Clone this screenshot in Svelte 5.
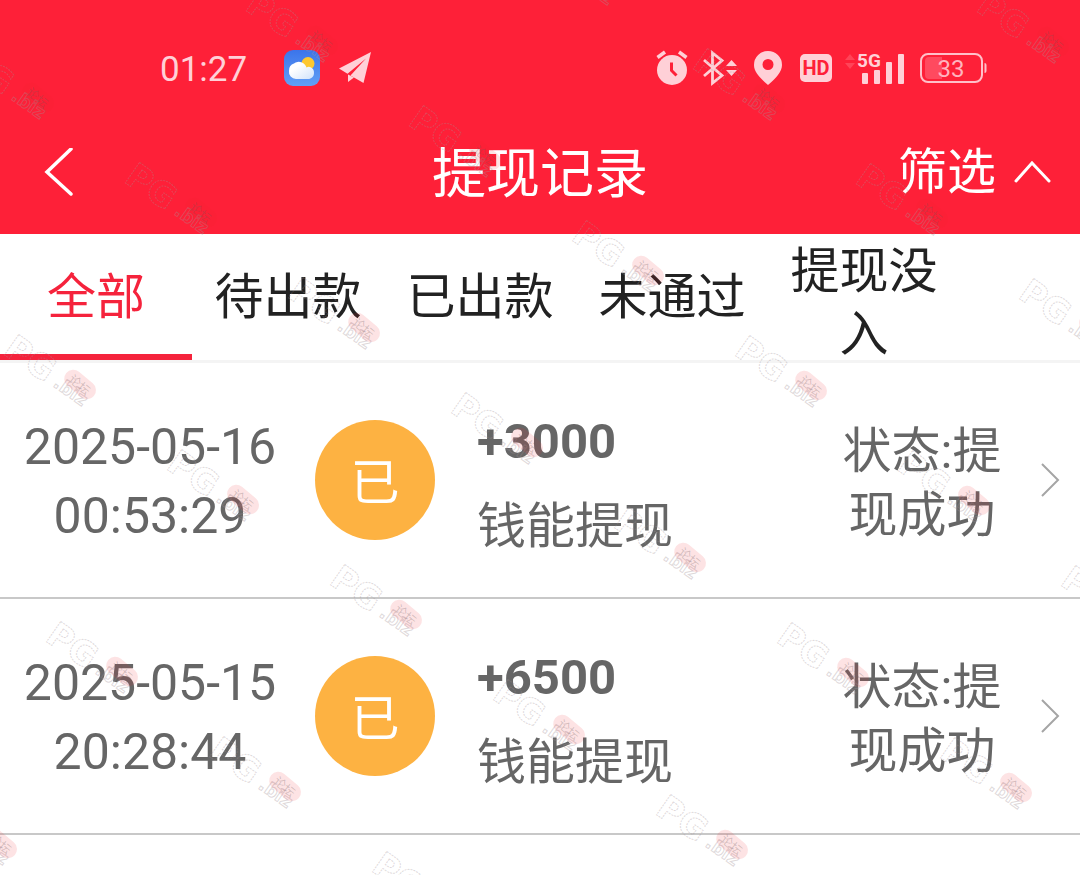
<script lang="ts">
  type Entry = { date: string; time: string; amount: string; name: string; status: string };

  const tabs = ["全部", "待出款", "已出款", "未通过", "提现没入"];
  let active = $state(0);
  let filterOpen = $state(true);

  const entries: Entry[] = [
    { date: "2025-05-16", time: "00:53:29", amount: "+3000", name: "钱能提现", status: "提现成功" },
    { date: "2025-05-15", time: "20:28:44", amount: "+6500", name: "钱能提现", status: "提现成功" },
  ];

  // slanted lattice of watermark stamps
  const stamps: { x: number; y: number }[] = [];
  for (let row = -2; row < 8; row++) {
    for (let col = -3; col < 8; col++) {
      const x = 976 - 121 * row - 284 * col;
      const y = -10 + 172 * row + 57 * col;
      if (x > -90 && x < 1075 && y > -75 && y < 870) stamps.push({ x, y });
    }
  }
</script>

<div class="page">
  <header>
    <div class="status-bar">
      <div class="group">
        <span class="clock">01:27</span>
        <svg class="weather" width="36" height="36" viewBox="0 0 36 36" aria-hidden="true">
          <defs>
            <linearGradient id="sky" x1="0" y1="0" x2="0" y2="1">
              <stop offset="0" stop-color="#3b74ea" />
              <stop offset="1" stop-color="#62a0f6" />
            </linearGradient>
            <linearGradient id="cloud" x1="0" y1="0" x2="1" y2="1">
              <stop offset="0.3" stop-color="#fff" />
              <stop offset="1" stop-color="#cfe2fb" />
            </linearGradient>
          </defs>
          <rect width="36" height="36" rx="9" fill="url(#sky)" />
          <circle cx="24" cy="13.500" r="6.500" fill="#fdc830" />
          <path d="M12 29a7 7 0 0 1-7-8 7 7 0 0 1 5-7.500 8 8 0 0 1 12.500 4 4.500 4.500 0 0 1 3.500-.5 6 6 0 0 1 4 6c0 3.500-2.500 6-6 6z" fill="url(#cloud)" />
        </svg>
        <svg width="34" height="32" viewBox="0 0 34 32" fill="#ffd0d7" aria-hidden="true">
          <path d="M33 0 1 16.500l8.500 5.200L28 6.500 12.500 23.500 25.500 31z" />
          <path d="M10 22.500v7.500l6-4.500z" />
        </svg>
      </div>
      <div class="group">
        <svg width="32" height="36" viewBox="0 0 32 36" aria-hidden="true">
          <circle cx="16" cy="20" r="15" fill="#ffd0d7" />
          <path d="M1.500 7.500 9 2M30.500 7.500 23 2" stroke="#ffd0d7" stroke-width="3.500" fill="none" />
          <path d="M15.500 12.500v8l5 5" stroke="#fe2038" stroke-width="3" fill="none" />
        </svg>
        <svg class="bluetooth" width="34" height="36" viewBox="0 0 34 36" aria-hidden="true">
          <path d="M1 10l18 15.500L9.500 33V3L19 10.500 1 26" stroke="#ffd0d7" stroke-width="2.800" fill="none" />
          <path d="M28.500 10l5.500 6H23zM28.500 26l5.500-6H23z" fill="#ffd0d7" />
        </svg>
        <svg class="pin" width="28" height="34" viewBox="0 0 28 34" aria-hidden="true">
          <path d="M14 0a14 14 0 0 1 14 14c0 7-6 13-14 20C6 27 0 21 0 14A14 14 0 0 1 14 0zm0 8a5.500 5.500 0 1 0 0 11 5.500 5.500 0 0 0 0-11z" fill="#ffd0d7" />
        </svg>
        <span class="hd">HD</span>
        <svg class="signal" width="60" height="36" viewBox="0 0 60 36" aria-hidden="true">
          <path d="M5 4l5 6H0zM5 19l5-6H0z" fill="#ff4458" />
          <rect x="17" y="23" width="6" height="11" rx="1" fill="#ffd0d7" />
          <rect x="29" y="20" width="6" height="14" rx="1" fill="#ffd0d7" />
          <rect x="41" y="12" width="6" height="22" rx="1" fill="#ffd0d7" />
          <rect x="53" y="4" width="6" height="30" rx="1" fill="#ffd0d7" />
          <text x="12" y="17" font-size="19" font-weight="700" fill="#ffd0d7">5G</text>
        </svg>
        <svg class="battery" width="68" height="32" viewBox="0 0 68 32" aria-hidden="true">
          <rect x="1" y="2" width="61" height="28" rx="7" stroke="#ffc0c9" stroke-width="2" fill="none" />
          <path d="M64.500 11q2 0 2 2v6q0 2-2 2z" fill="#ffc0c9" />
          <path d="M22 5H9q-4 0-4 4v14q0 4 4 4h13z" fill="#ff4a5f" />
          <text x="31" y="25" font-size="24" text-anchor="middle" fill="#ffb3be">33</text>
        </svg>
      </div>
    </div>
    <div class="nav">
      <button class="back" aria-label="返回">
        <svg width="30" height="50" viewBox="0 0 30 50" fill="none" stroke="#fff" stroke-width="3.500" stroke-linecap="round">
          <path d="M27 1 3 24l24 22" />
        </svg>
      </button>
      <h1>提现记录</h1>
      <button class="filter" onclick={() => (filterOpen = !filterOpen)}>
        <span>筛选</span>
        <svg class:down={!filterOpen} width="38" height="24" viewBox="0 0 38 24" fill="none" stroke="#fff" stroke-width="3" stroke-linecap="round" aria-hidden="true">
          <path d="M2 20 18 2l17 18" />
        </svg>
      </button>
    </div>
  </header>

  <nav class="tabs">
    {#each tabs as tab, i (tab)}
      <button class:active={active === i} onclick={() => (active = i)}>{tab}</button>
    {/each}
  </nav>

  <main>
    {#each entries as entry (entry.date)}
      <a class="entry" href="#detail">
        <span class="when"><span>{entry.date}</span><span>{entry.time}</span></span>
        <span class="badge">已</span>
        <span class="info">
          <strong>{entry.amount}</strong>
          <span>{entry.name}</span>
        </span>
        <span class="state">状态:{entry.status}</span>
        <svg width="20" height="34" viewBox="0 0 20 34" fill="none" stroke="#a5a5a5" stroke-width="2" aria-hidden="true">
          <path d="M2 1l16 16L2 33" />
        </svg>
      </a>
    {/each}
  </main>

  <svg class="watermark" aria-hidden="true">
    {#each stamps as s}
      <g transform="translate({s.x - 1} {s.y + 20}) rotate(35)">
        <text class="pg" x="0" y="0">PG</text>
        <text class="biz" x="60" y="-2">.biz</text>
        <g transform="translate(82 -19) rotate(5)">
          <rect x="-18" y="-9" width="36" height="18" rx="9" />
          <text class="forum" x="-12" y="5">论坛</text>
        </g>
      </g>
    {/each}
  </svg>
</div>

<style>
  :global(body) {
    margin: 0;
    background: #fff;
  }
  .page {
    position: relative;
    min-height: 100vh;
    overflow: hidden;
    font-family: Roboto, "Noto Sans CJK SC", sans-serif;
    font-size: 49px;
    color: #666;
  }
  button {
    background: none;
    border: none;
    padding: 0;
    font: inherit;
    color: inherit;
    cursor: pointer;
  }
  svg {
    display: block;
    flex: none;
  }
  header {
    background: #fe2038;
    color: #fff;
  }
  .status-bar {
    display: flex;
    justify-content: space-between;
    align-items: center;
    height: 64px;
    padding: 36px 92px 12px 160px;
  }
  .group {
    display: flex;
    align-items: center;
  }
  .clock {
    padding-top: 4px;
    font-size: 35px;
    line-height: 40px;
    color: #ffd0d7;
  }
  .weather {
    margin: 0 18px 0 37px;
  }
  .bluetooth {
    margin: 0 17px 0 15px;
  }
  .hd {
    margin: 0 13px 0 18px;
    width: 32px;
    border-radius: 5px;
    background: #ffd0d7;
    color: #fe2038;
    font-size: 20px;
    font-weight: 700;
    line-height: 28px;
    text-align: center;
  }
  .battery {
    margin-left: 15px;
  }
  .nav {
    display: grid;
    grid-template-columns: 1fr auto 1fr;
    align-items: center;
    height: 122px;
    padding: 0 28px 0 44px;
  }
  .back {
    justify-self: start;
  }
  h1 {
    margin: 0 16px 0 0;
    padding-top: 4px;
    font-size: 54px;
    font-weight: 400;
    line-height: 80px;
  }
  .filter {
    justify-self: end;
    display: flex;
    align-items: center;
    gap: 18px;
    line-height: 64px;
  }
  .down {
    transform: rotate(180deg);
  }
  .tabs {
    display: flex;
    height: 126px;
    border-bottom: 3px solid #f4f4f4;
    color: #222;
  }
  .tabs button {
    box-sizing: border-box;
    flex: 0 1 192px;
    padding: 0 20px;
    border-bottom: 6px solid transparent;
    border-top: 6px solid transparent;
    line-height: 63px;
  }
  .tabs .active {
    color: #f5233c;
    border-bottom-color: #f5233c;
  }
  .entry {
    display: flex;
    align-items: center;
    height: 234px;
    padding: 0 20px 0 24px;
    border-bottom: 2px solid #c8c8c8;
    color: inherit;
    text-decoration: none;
  }
  .when {
    display: flex;
    flex-direction: column;
    align-items: center;
    width: 252px;
    padding-top: 4px;
    font-size: 50px;
    line-height: 69px;
    white-space: nowrap;
  }
  .badge {
    box-sizing: border-box;
    flex: none;
    width: 120px;
    height: 120px;
    margin: 0 42px 0 39px;
    padding-top: 6px;
    border-radius: 50%;
    background: #fdb242;
    color: #fff;
    line-height: 116px;
    text-align: center;
  }
  .info {
    flex: 1;
    display: flex;
    flex-direction: column;
    padding-top: 8px;
    line-height: 85px;
  }
  .state {
    width: 168px;
    margin-right: 34px;
    padding-top: 8px;
    line-height: 64px;
    text-align: center;
    word-break: break-all;
  }
  .watermark {
    position: absolute;
    inset: 0;
    width: 100%;
    height: 100%;
    pointer-events: none;
  }
  .watermark .pg {
    font: 700 34px "DejaVu Sans", sans-serif;
    fill: none;
    stroke: rgba(160, 145, 150, 0.35);
    stroke-dasharray: 2 1;
  }
  .watermark .biz {
    font: 700 18px "DejaVu Sans", sans-serif;
    fill: none;
    stroke: rgba(160, 145, 150, 0.35);
  }
  .watermark rect {
    fill: rgba(240, 40, 50, 0.13);
  }
  .watermark .forum {
    font-size: 12px;
    fill: rgba(110, 90, 90, 0.3);
  }
</style>
